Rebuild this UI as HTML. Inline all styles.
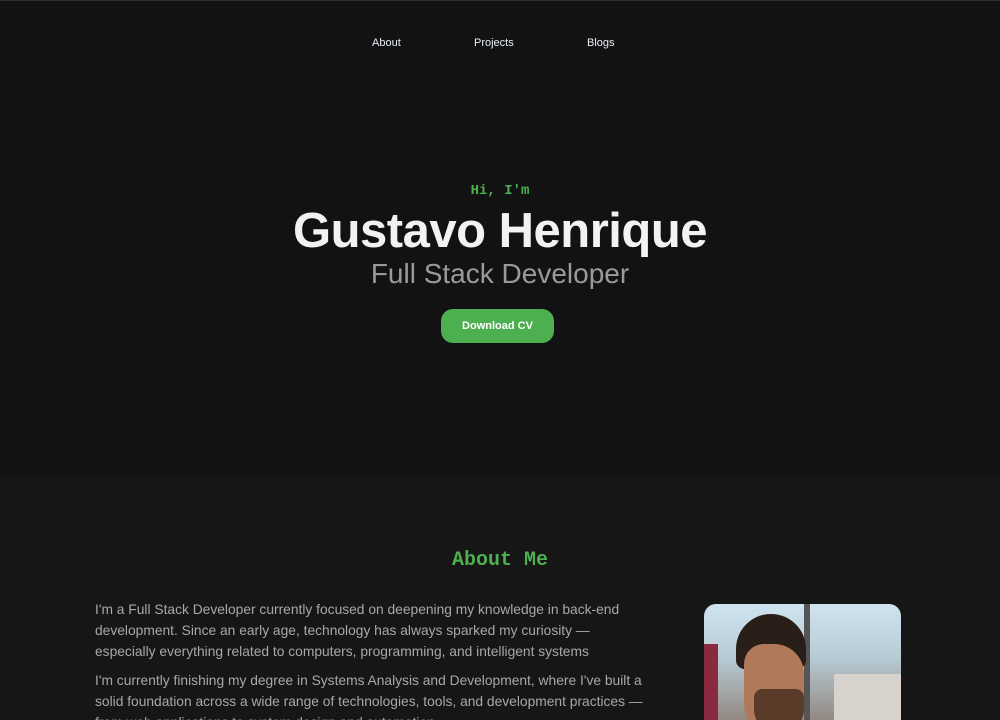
<!DOCTYPE html>
<html style="overflow:hidden;height:720px"><head><style>
*{margin:0;padding:0;box-sizing:border-box}
body{width:1000px;height:720px;overflow:hidden;background:#121212;font-family:"Liberation Sans",sans-serif;position:relative;border-top:1px solid #2a2f38}
nav a{position:absolute;top:36px;color:#e8eef5;font-size:11px;text-decoration:none}
.hi{position:absolute;top:182px;width:100%;text-align:center;color:#4caf50;font-family:"Liberation Mono",monospace;font-weight:bold;font-size:14px}
h1{position:absolute;top:202px;width:100%;text-align:center;color:#f2f2f2;font-size:49px;font-weight:bold;letter-spacing:-0.5px}
.sub{position:absolute;top:257px;width:100%;text-align:center;color:#9a9a9a;font-size:28px}
.btn{position:absolute;left:441px;top:308px;width:113px;height:34px;border-radius:12px;background:#4caf50;color:#fff;font-size:11px;font-weight:bold;text-align:center;line-height:34px}
.about{position:absolute;top:474px;left:0;width:1000px;height:246px;background:#161616}
h2{position:absolute;top:548px;width:100%;text-align:center;color:#4caf50;font-family:"Liberation Mono",monospace;font-size:20px;font-weight:bold}
.txt{position:absolute;left:95px;top:598px;width:600px;color:#a8a8a8;font-size:13.8px;line-height:21px;white-space:nowrap}
.txt p{margin-bottom:8px}
.img{position:absolute;left:704px;top:603px;width:197px;height:130px;border-radius:12px;overflow:hidden;background:linear-gradient(180deg,#cfe4ee 0%,#b8ccd6 40%,#8a7a70 100%)}
</style></head><body>
<nav><a style="left:372px">About</a><a style="left:474px">Projects</a><a style="left:587px">Blogs</a></nav>
<div class="about"></div>
<div class="hi">Hi, I'm</div>
<h1>Gustavo Henrique</h1>
<div class="sub">Full Stack Developer</div>
<div class="btn">Download CV</div>
<h2>About Me</h2>
<div class="txt"><p>I'm a Full Stack Developer currently focused on deepening my knowledge in back-end<br>development. Since an early age, technology has always sparked my curiosity —<br>especially everything related to computers, programming, and intelligent systems</p><p>I'm currently finishing my degree in Systems Analysis and Development, where I've built a<br>solid foundation across a wide range of technologies, tools, and development practices —<br>from web applications to system design and automation.</p></div>
<div class="img">
<div style="position:absolute;left:0;top:40px;width:14px;height:90px;background:#8a2a40"></div>
<div style="position:absolute;left:100px;top:0;width:6px;height:130px;background:#555"></div>
<div style="position:absolute;left:130px;top:70px;width:67px;height:60px;background:#d8d2cc"></div>
<div style="position:absolute;left:32px;top:10px;width:70px;height:55px;border-radius:40px 40px 10px 10px;background:#2a1e18"></div>
<div style="position:absolute;left:40px;top:40px;width:60px;height:90px;border-radius:20px 30px 30px 30px;background:#b07a5a"></div>
<div style="position:absolute;left:50px;top:85px;width:50px;height:45px;border-radius:10px 10px 30px 30px;background:#5a3a28"></div>
</div>
</body></html>
